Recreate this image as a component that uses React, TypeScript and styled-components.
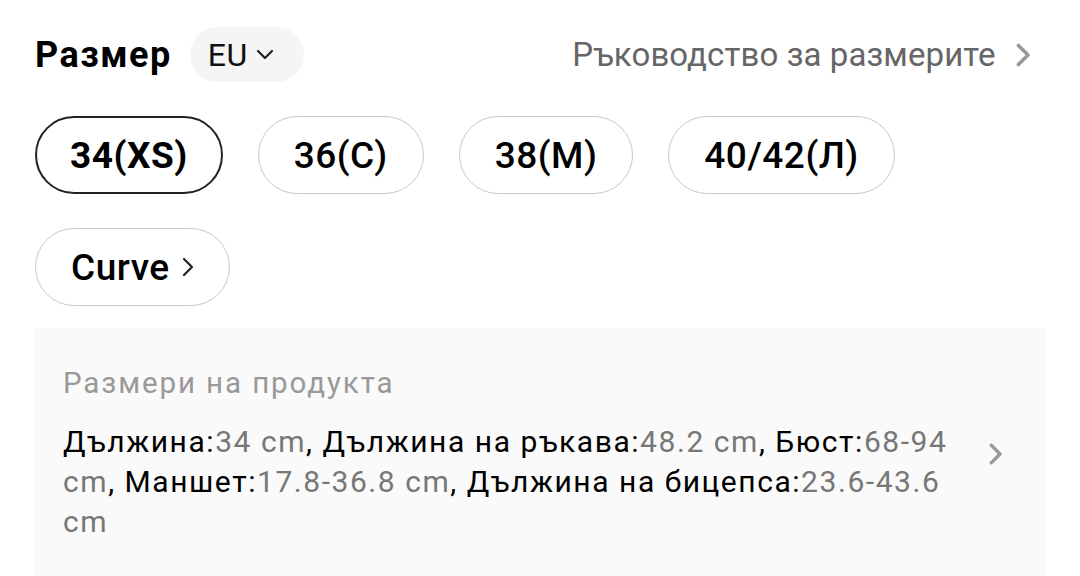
import React from "react";
import styled, { createGlobalStyle } from "styled-components";

const GlobalStyle = createGlobalStyle`
  html, body {
    margin: 0;
    padding: 0;
    background: #fff;
  }
  body {
    font-family: Roboto, "Noto Sans", Arial, sans-serif;
    color: #000;
  }
`;

const Page = styled.div`
  padding: 27px 34px 0 35px;
  overflow: hidden;
  height: 576px;
  box-sizing: border-box;
`;

const Header = styled.div`
  display: flex;
  align-items: center;
  justify-content: space-between;
  height: 55px;
`;

const TitleGroup = styled.div`
  display: flex;
  align-items: center;
  gap: 18px;
`;

const Title = styled.h2`
  margin: 0;
  font-size: 36px;
  font-weight: 700;
  letter-spacing: 1.5px;
`;

const UnitPill = styled.button`
  display: flex;
  align-items: center;
  gap: 8px;
  height: 55px;
  padding: 0 30px 0 18px;
  border: none;
  border-radius: 28px;
  background: #f5f5f5;
  font-family: inherit;
  font-size: 32px;
  letter-spacing: 0.5px;
  color: #111;
`;

const GuideLink = styled.a`
  display: flex;
  align-items: center;
  gap: 20px;
  font-size: 33px;
  letter-spacing: 0.1px;
  color: #666;
  text-decoration: none;
  margin-right: 16px;
`;

const SizeList = styled.div`
  display: flex;
  flex-wrap: wrap;
  gap: 34px 35px;
  margin-top: 34px;
`;

const SizePill = styled.button<{ $active?: boolean }>`
  display: flex;
  align-items: center;
  gap: 12px;
  height: 78px;
  box-sizing: border-box;
  padding: ${(p) => (p.$active ? "0 33px" : "0 35px")};
  border-radius: 39px;
  background: #fff;
  border: ${(p) => (p.$active ? "2.5px solid #222" : "1px solid #c8c8c8")};
  font-family: inherit;
  font-size: 37px;
  letter-spacing: 0.5px;
  font-weight: ${(p) => (p.$active ? 700 : 500)};
  color: #000;
`;

const InfoBox = styled.div`
  display: flex;
  align-items: center;
  margin-top: 22px;
  padding: 37px 44px 37px 28px;
  background: #fafafa;
  gap: 28px;
`;

const InfoBody = styled.div`
  flex: 1;
`;

const InfoLabel = styled.div`
  font-size: 29.5px;
  letter-spacing: 1.9px;
  color: #999;
  line-height: 36px;
`;

const InfoText = styled.p`
  margin: 21px 0 0;
  font-size: 30px;
  letter-spacing: 1.55px;
  line-height: 40px;
  color: #000;
`;

const Value = styled.span`
  color: #777;
`;

const Chevron = ({ size, color, stroke }: { size: number; color: string; stroke: number }) => (
  <svg width={size * 0.6} height={size} viewBox="0 0 12 20" fill="none">
    <path d="M2 2l8 8-8 8" stroke={color} strokeWidth={stroke} strokeLinecap="round" strokeLinejoin="round" />
  </svg>
);

const ChevronDown = () => (
  <svg width="18" height="12" viewBox="0 0 18 12" fill="none">
    <path d="M2 2l7 7 7-7" stroke="#222" strokeWidth="2.2" strokeLinecap="round" strokeLinejoin="round" />
  </svg>
);

const sizes = ["34(XS)", "36(С)", "38(М)", "40/42(Л)"];

const measures: [string, string][] = [
  ["Дължина", "34 cm"],
  ["Дължина на ръкава", "48.2 cm"],
  ["Бюст", "68-94 cm"],
  ["Маншет", "17.8-36.8 cm"],
  ["Дължина на бицепса", "23.6-43.6 cm"],
];

export default function App() {
  return (
    <>
      <GlobalStyle />
      <Page>
        <Header>
          <TitleGroup>
            <Title>Размер</Title>
            <UnitPill>
              EU
              <ChevronDown />
            </UnitPill>
          </TitleGroup>
          <GuideLink href="#">
            Ръководство за размерите
            <Chevron size={24} color="#999" stroke={3} />
          </GuideLink>
        </Header>

        <SizeList>
          {sizes.map((s, i) => (
            <SizePill key={s} $active={i === 0}>
              {s}
            </SizePill>
          ))}
          <SizePill>
            Curve
            <Chevron size={20} color="#222" stroke={2.2} />
          </SizePill>
        </SizeList>

        <InfoBox>
          <InfoBody>
            <InfoLabel>Размери на продукта</InfoLabel>
            <InfoText>
              {measures.map(([k, v], i) => (
                <React.Fragment key={k}>
                  {k}:<Value>{v}</Value>
                  {i < measures.length - 1 ? ", " : ""}
                </React.Fragment>
              ))}
            </InfoText>
          </InfoBody>
          <Chevron size={22} color="#999" stroke={3} />
        </InfoBox>
      </Page>
    </>
  );
}
